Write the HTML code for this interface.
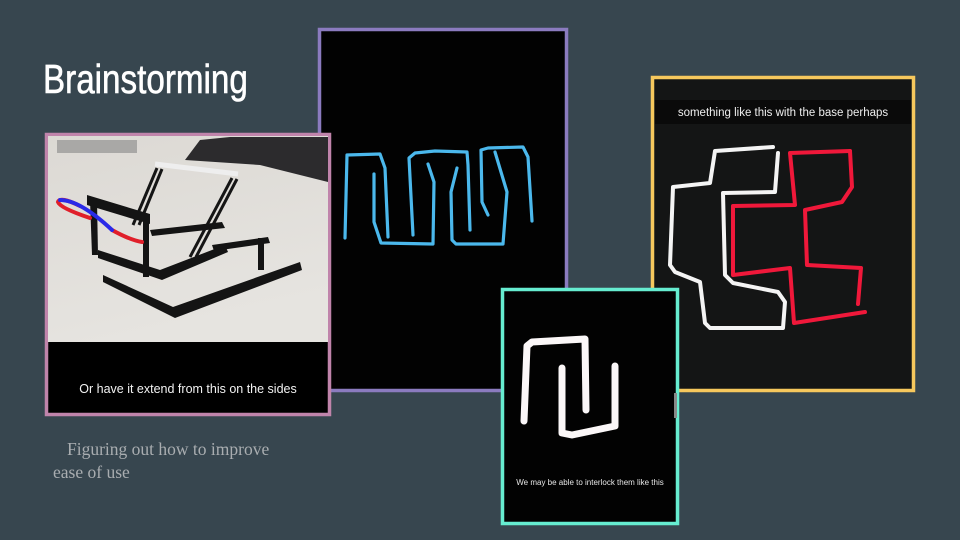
<!DOCTYPE html>
<html><head><meta charset="utf-8"><style>
html,body{margin:0;padding:0}
body{width:960px;height:540px;background:#37464f;position:relative;overflow:hidden;font-family:"Liberation Sans",sans-serif}
.t{position:absolute;left:43px;top:55px;font-size:41px;color:#fff;transform:scaleX(0.81);transform-origin:0 0;white-space:nowrap;line-height:48px;-webkit-text-stroke:0.6px #fff}
.sub{position:absolute;left:53px;top:438px;font-family:"Liberation Serif",serif;font-size:17.5px;color:#a9adb0;line-height:23px}
svg{position:absolute;left:0;top:0}
</style></head><body>
<div class="t">Brainstorming</div>
<div class="sub"><span style="padding-left:14px">Figuring out how to improve</span><br>ease of use</div>
<svg width="960" height="540" viewBox="0 0 960 540">
 <!-- purple -->
 <rect x="319.5" y="29.5" width="247" height="361" fill="#020202" stroke="#8b7bbf" stroke-width="3.5"/>
 <g fill="none" stroke="#4bb8ec" stroke-width="3.2" stroke-linecap="round" stroke-linejoin="round">
  <path d="M345 238 L347 155 L380 154 L385 168 L388 237"/>
  <path d="M374 174 L374 222 L381 243 L433 244 L434 182 L428 164"/>
  <path d="M413 235 L409 158 L415 153 L435 151 L467 152 L468 165 L470 230"/>
  <path d="M457 168 L451 192 L452 240 L456 244 L503 244 L507 192 L495 152"/>
  <path d="M488 215 L482 202 L481 150 L488 148 L523 147 L528 157 L532 221"/>
 </g>
 <!-- yellow -->
 <rect x="652.5" y="77.5" width="261" height="313" fill="#141515" stroke="#f6c85d" stroke-width="3.5"/>
 <rect x="655" y="100" width="256" height="24" fill="#0a0a0a"/>
 <text x="783" y="116" fill="#eee" font-size="11.5" text-anchor="middle" font-family="Liberation Sans, sans-serif">something like this with the base perhaps</text>
 <g fill="none" stroke-width="4" stroke-linecap="round" stroke-linejoin="round">
  <path stroke="#f4f4f4" d="M773 147 L715 151 L710 183 L673 187 L670 265 L675 272 L700 282 L705 323 L710 328 L783 328 L785 302 L778 292 L733 283 L725 275 L723 193 L775 192 L778 153"/>
  <path stroke="#f0183a" d="M850 151 L790 153 L795 205 L733 206 L733 275 L790 268 L794 323 L865 312"/>
  <path stroke="#f0183a" d="M858 304 L861 268 L807 265 L805 210 L842 202 L852 187 L850 151"/>
 </g>
 <!-- pink photo -->
 <rect x="46.5" y="134.5" width="283" height="280" fill="#000" stroke="#c084ab" stroke-width="3.5"/>
 <defs><linearGradient id="g" x1="0" y1="0" x2="0.3" y2="1"><stop offset="0" stop-color="#dcd9d4"/><stop offset="1" stop-color="#e6e4e0"/></linearGradient></defs>
 <rect x="48" y="136" width="280" height="206" fill="url(#g)"/>
 <path d="M185 160 L200 140 L230 137 L328 137 L328 182 L300 175 L260 165 Z" fill="#2c2b2d"/>
 <rect x="57" y="140" width="80" height="13" fill="#a9a8a6"/>
 <path d="M155 164 L238 174" stroke="#eee" stroke-width="5"/>
 <g stroke="#151515" stroke-width="3" fill="none">
  <path d="M157 168 L133 225 M162 169 L139 225 M232 178 L190 257 M237 179 L196 257"/>
 </g>
 <g fill="#141414">
  <path d="M87 195 L150 214 L150 224 L87 205 Z"/>
  <path d="M90 200 L97 200 L98 255 L92 255 Z"/>
  <path d="M143 217 L149 217 L149 277 L143 277 Z"/>
  <path d="M98 250 L160 270 L225 245 L228 252 L162 280 L98 258 Z"/>
  <path d="M103 275 L173 307 L300 262 L302 270 L175 318 L103 282 Z"/>
  <path d="M150 230 L222 222 L225 228 L152 236 Z"/>
  <path d="M258 238 L264 238 L264 270 L258 270 Z"/>
  <path d="M212 245 L268 237 L270 243 L214 251 Z"/>
 </g>
 <path d="M90 218 Q60 208 58 202 Q60 196 80 206 M112 230 Q130 240 142 242" stroke="#e01f2a" stroke-width="4" fill="none" stroke-linecap="round"/>
 <path d="M60 200 Q80 200 112 230" stroke="#2a2ae8" stroke-width="4" fill="none" stroke-linecap="round"/>
 <text x="188" y="393" fill="#f2f2f2" font-size="12.5" text-anchor="middle" font-family="Liberation Sans, sans-serif">Or have it extend from this on the sides</text>
 <!-- teal -->
 <rect x="502.5" y="289.5" width="175" height="234" fill="#020202" stroke="#66ecd0" stroke-width="3.5"/>
 <rect x="674" y="393" width="3" height="25" fill="#888"/>
 <g fill="none" stroke="#fbf7f8" stroke-width="7" stroke-linecap="round" stroke-linejoin="round">
  <path d="M524 421 L527 346 L532 342 L585 339 L586 410"/>
  <path d="M562 368 L562 433 L572 435 L615 426 L615 366"/>
 </g>
 <text x="590" y="485" fill="#e6e6e6" font-size="8" text-anchor="middle" font-family="Liberation Sans, sans-serif">We may be able to interlock them like this</text>
</svg>
</body></html>
